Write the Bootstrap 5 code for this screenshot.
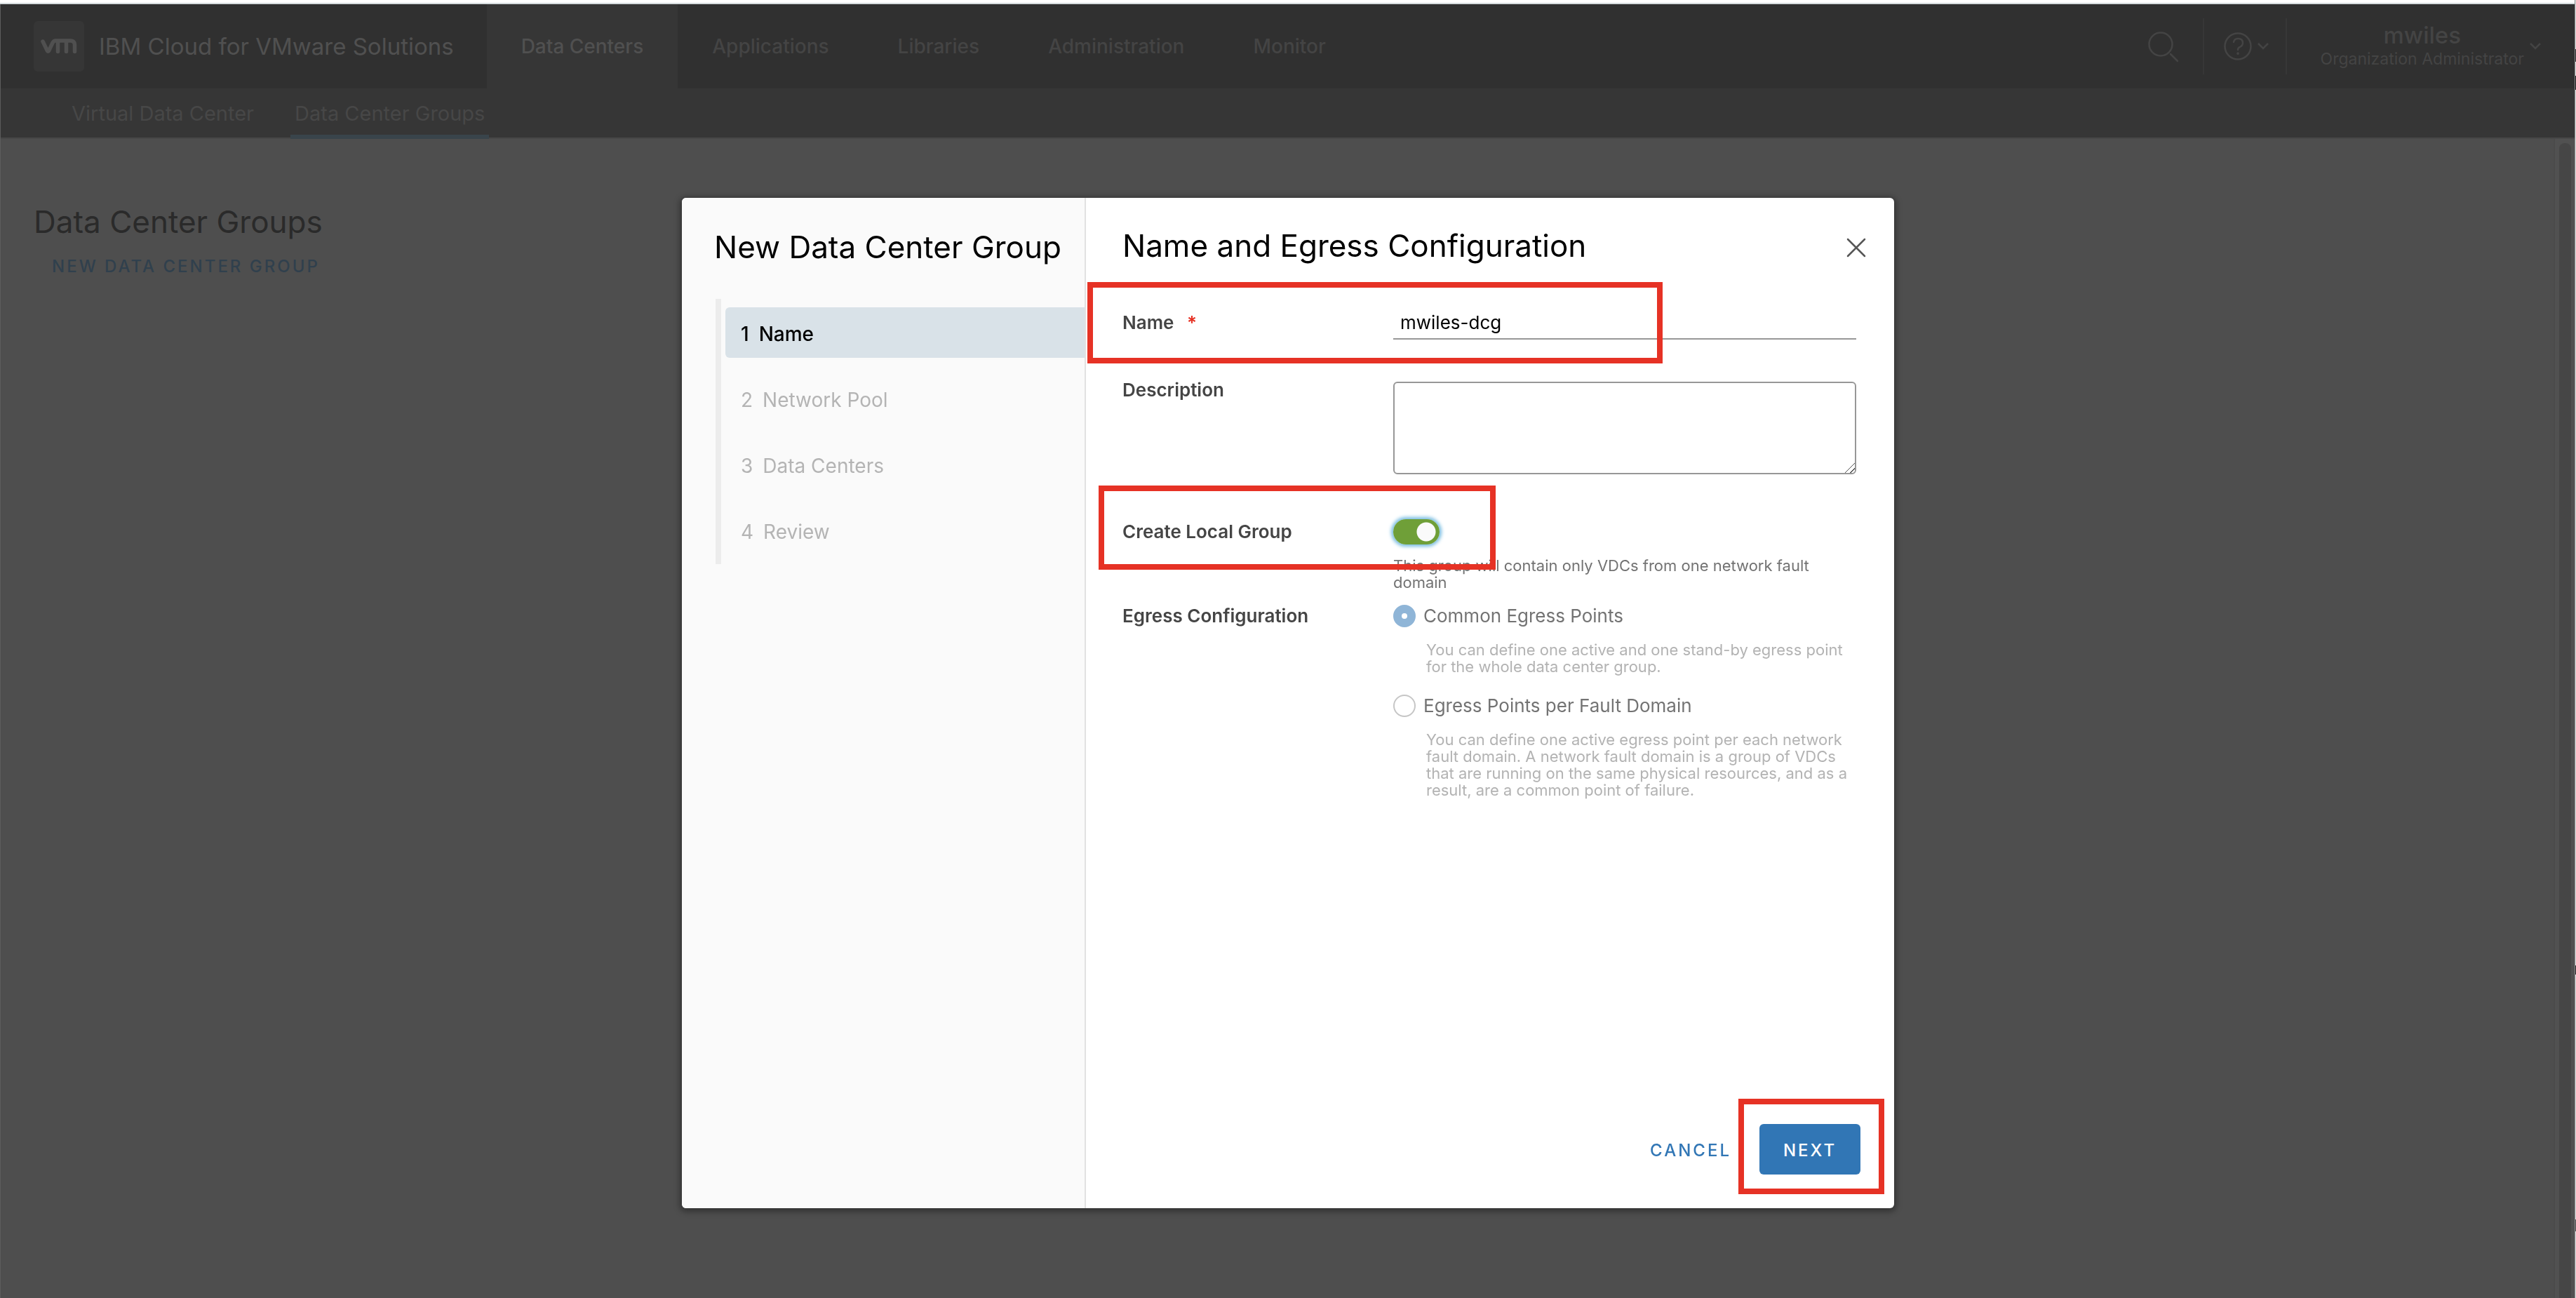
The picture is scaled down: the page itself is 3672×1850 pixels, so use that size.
<!DOCTYPE html>
<html lang="en">
<head>
<meta charset="utf-8">
<meta name="viewport" content="width=device-width, initial-scale=1">
<title>Data Center Groups</title>
<link href="https://cdn.jsdelivr.net/npm/bootstrap@5.3.0/dist/css/bootstrap.min.css" rel="stylesheet">
<style>
body{font-family:Inter,"Open Sans",sans-serif;background:#4e4e4e;color:#2a2a2a;font-size:26px;line-height:36px}
a{text-decoration:none;color:inherit}
.browser-line{height:6px;background:#fff;border-bottom:2px solid #d6dcde}
.app-shell{border-left:1px solid #5c5c5c}
.window-edge{width:2px;border-left:1px solid #8d8d8d;background:linear-gradient(#e4e4e4 70px,#222 70px 88px,#e4e4e4 88px 108px,#111 108px 128px,#e4e4e4 128px 1376px,#222 1376px 1389px,#e4e4e4 1389px 1738px,#4a4a4a 1738px 1755px,#e4e4e4 1755px)}
.topbar{height:120px;background:#303030;color:#444}
.brand{padding:0 47px;gap:21px;font-size:33px;color:#505050}
.brand-mark{width:72px;height:72px;border-radius:6px;background:#363636}
.main-tab{height:120px;padding:0 49px;font-size:28px;font-weight:500}
.main-tab.current{background:#363636;color:#505050}
.tool{height:80px;border-right:2px solid #373737}
.tool-btn{border:0;background:none;padding:0;color:inherit}
.user-name{font-size:33px;line-height:36px;font-weight:500}
.user-role{font-size:23px;line-height:32px}
.subbar{height:72px;background:#363636;border-bottom:2px solid #484848;padding-left:95px;gap:46px;color:#474747}
.sub-tab{height:72px;line-height:72px;padding:0 6px;font-size:29px}
.sub-tab.current{border-bottom:6px solid #39444b}
.page-body{padding:88px 47px}
.page-title{font-size:44px;line-height:60px;font-weight:400;margin:0}
.caps-btn{font-size:24px;line-height:36px;font-weight:500;letter-spacing:3px;border:0;background:none;padding:0;text-transform:uppercase}
.new-group{color:#30404d;margin:16px 0 0 26px}
.scroll-track{width:30px;background:#515151;border-left:2px solid #4b4b4b;padding:6px 5px 0 6px}
.scroll-thumb{border-radius:8px 8px 0 0;background:#464646}
.wizard-dialog{max-width:1728px;width:100%;margin:282px auto 0}
.wizard{min-height:1440px;border:0;border-radius:6px;box-shadow:0 2px 8px 3px rgba(0,0,0,.35);overflow:hidden;color:#000}
.wizard-side{width:576px;background:#fafafa;border-right:2px solid #e1e1e1;padding:40px 0 0 46px}
.wizard-title{font-size:44px;line-height:60px;font-weight:400;margin:0;color:#000;white-space:nowrap}
.steps{margin:44px 0 0 2px;border-left:8px solid #ececec;padding:12px 0 12px 6px;gap:22px}
.step{height:72px;padding:4px 0 0 22px;gap:14px;border-radius:6px 0 0 6px;color:#b4b4b4;font-size:28px}
.step.current{background:#d9e2e8;color:#000;font-weight:500}
.wizard-main{padding:38px 54px 48px 52px}
.close-btn{border:0;background:none;padding:6px 0 0;margin-right:-14px;color:#565656;line-height:0}
.field{display:grid;grid-template-columns:386px 1fr}
.field-name{margin-top:56px}
.field-desc{margin-top:60px}
.field-local{margin-top:64px}
.field-egress{margin-top:20px}
.field-label{font-weight:600;font-size:26px;line-height:24px;color:#454545}
.field-local .field-label,.field-egress .field-label{line-height:36px}
.field-egress .field-label{line-height:32px}
.required{color:#e63022;margin-left:12px}
.text-line{height:48px;width:100%;border:0;border-bottom:2px solid #979797;padding:0 10px;font-size:26px;color:#000;background:none}
.text-area{display:block;width:100%;height:132px;border:2px solid #979797;border-radius:6px}
.text-area::-webkit-resizer{background:linear-gradient(135deg,transparent 50%,#555 50% 55%,transparent 55% 76%,#555 76% 81%,transparent 81%)}
.switch{appearance:none;width:66px;height:36px;border-radius:18px;background:radial-gradient(circle at 47px 18px,#fafafa 13px,#6f9f38 14px);box-shadow:0 0 5px 3px #79bde0;margin:0;display:block}
.hint{font-size:22px;line-height:24px;color:#737373;margin:18px 0 0}
.hint.muted{color:#b3b3b3;margin:20px 0 28px 47px}
.pick{appearance:none;width:32px;height:32px;border:2px solid #c6c6c6;border-radius:50%;margin:0}
.pick:checked{border:12px solid #8fb5d7}
.pick-row{gap:11px;line-height:32px;color:#737373;font-size:26px}
.callout-frame{position:absolute;border:8px solid #e63225;pointer-events:none}
.frame-name{left:-50px;top:-34px;width:820px;height:116px}
.frame-local{left:-34px;top:-48px;width:566px;height:120px}
.frame-next{inset:-36px -34px -28px -30px}
.wizard-foot{margin-right:-6px}
.cancel-btn{color:#3176b5;margin-right:40px;padding-top:3px}
.next-btn{background:#3176b5;color:#fff;width:144px;height:72px;border-radius:6px;padding-top:3px}
</style>
<script src="https://cdn.jsdelivr.net/npm/bootstrap@5.3.0/dist/js/bootstrap.bundle.min.js"></script>
</head>
<body>
<div class="d-flex min-vh-100">
<div class="flex-grow-1 d-flex flex-column">
  <div class="browser-line"></div>
  <div class="app-shell flex-grow-1 d-flex flex-column">
    <header class="topbar d-flex align-items-center">
      <a href="#" class="brand d-flex align-items-center">
        <span class="brand-mark d-flex align-items-center justify-content-center">
          <svg width="52" height="22" viewBox="0 0 52 22" fill="none" stroke="currentColor" stroke-width="5.500" stroke-linecap="round" stroke-linejoin="round"><path d="M3 4l6.500 13.500q1 1.500 2 0L17 6q1.500-3 4-3h21q6.500 0 6.500 6v9.500M24.500 4v14.500M36.500 4v14.500"/></svg>
        </span>
        <span>IBM Cloud for VMware Solutions</span>
      </a>
      <nav class="d-flex">
        <a href="#" class="main-tab current d-flex align-items-center">Data Centers</a>
        <a href="#" class="main-tab d-flex align-items-center">Applications</a>
        <a href="#" class="main-tab d-flex align-items-center">Libraries</a>
        <a href="#" class="main-tab d-flex align-items-center">Administration</a>
        <a href="#" class="main-tab d-flex align-items-center">Monitor</a>
      </nav>
      <div class="ms-auto d-flex align-items-center">
        <div class="tool d-flex align-items-center pe-4"><button class="tool-btn me-2" aria-label="Search"><svg width="48" height="48" viewBox="0 0 48 48" fill="none" stroke="currentColor" stroke-width="2.500" stroke-linecap="round"><circle cx="20" cy="21" r="16.500"/><path d="M34 35l10 10"/></svg></button></div>
        <div class="tool d-flex align-items-center px-4"><button class="tool-btn d-flex align-items-center gap-2 ms-1" aria-label="Help"><svg width="40" height="40" viewBox="0 0 40 40" fill="none" stroke="currentColor" stroke-width="2.500" stroke-linecap="round"><circle cx="20" cy="20" r="18.500"/><path d="M14 14q1-5 6-5 7 0 7 6 0 4-4 6-3 1-3 4"/><path d="M20 30v.5" stroke-width="3.500"/></svg><svg width="16" height="10" viewBox="0 0 16 10" fill="none" stroke="currentColor" stroke-width="2.500"><path d="M1 1l7 7 7-7"/></svg></button></div>
        <button class="tool-btn d-flex align-items-center gap-2 ps-5 pe-5"><span class="text-center"><span class="d-block user-name">mwiles</span><span class="d-block user-role">Organization Administrator</span></span><svg width="16" height="10" viewBox="0 0 16 10" fill="none" stroke="currentColor" stroke-width="2.500"><path d="M1 1l7 7 7-7"/></svg></button>
      </div>
    </header>
    <nav class="subbar d-flex">
      <a href="#" class="sub-tab">Virtual Data Center</a>
      <a href="#" class="sub-tab current">Data Center Groups</a>
    </nav>
    <div class="flex-grow-1 d-flex">
      <main class="page-body flex-grow-1">
        <h1 class="page-title">Data Center Groups</h1>
        <button class="caps-btn new-group">New Data Center Group</button>
      </main>
      <div class="scroll-track d-flex"><div class="scroll-thumb flex-grow-1"></div></div>
    </div>
  </div>
</div>
<div class="window-edge"></div>
</div>

<div class="modal d-block overflow-hidden" role="dialog" aria-labelledby="wizard-title">
  <div class="modal-dialog wizard-dialog">
    <div class="modal-content wizard flex-row">
      <aside class="wizard-side flex-shrink-0">
        <h2 class="wizard-title" id="wizard-title">New Data Center Group</h2>
        <nav class="steps d-flex flex-column">
          <a href="#" class="step current d-flex align-items-center"><span>1</span><span>Name</span></a>
          <a href="#" class="step d-flex align-items-center"><span>2</span><span>Network Pool</span></a>
          <a href="#" class="step d-flex align-items-center"><span>3</span><span>Data Centers</span></a>
          <a href="#" class="step d-flex align-items-center"><span>4</span><span>Review</span></a>
        </nav>
      </aside>
      <form class="wizard-main flex-grow-1 d-flex flex-column">
        <div class="d-flex justify-content-between align-items-center">
          <h2 class="wizard-title">Name and Egress Configuration</h2>
          <button type="button" class="close-btn" aria-label="Close"><svg width="28" height="28" viewBox="0 0 28 28" stroke="currentColor" stroke-width="2.500" stroke-linecap="round"><path d="M2 2l24 24M26 2L2 26"/></svg></button>
        </div>
        <div class="field field-name position-relative align-items-center">
          <label class="field-label" for="group-name">Name <span class="required">*</span></label>
          <input class="text-line" id="group-name" type="text" value="mwiles-dcg">
          <div class="callout-frame frame-name"></div>
        </div>
        <div class="field field-desc">
          <label class="field-label" for="group-desc">Description</label>
          <textarea class="text-area" id="group-desc"></textarea>
        </div>
        <div class="field field-local position-relative">
          <label class="field-label" for="local-group">Create Local Group</label>
          <div>
            <input class="switch" id="local-group" type="checkbox" role="switch" checked>
            <p class="hint">This group will contain only VDCs from one network fault domain</p>
          </div>
          <div class="callout-frame frame-local"></div>
        </div>
        <div class="field field-egress" role="radiogroup" aria-labelledby="egress-label">
          <span class="field-label" id="egress-label">Egress Configuration</span>
          <div>
            <div class="pick-row d-flex"><input class="pick" type="radio" name="egress" id="egress-common" checked><label for="egress-common">Common Egress Points</label></div>
            <p class="hint muted">You can define one active and one stand-by egress point for the whole data center group.</p>
            <div class="pick-row d-flex"><input class="pick" type="radio" name="egress" id="egress-fault"><label for="egress-fault">Egress Points per Fault Domain</label></div>
            <p class="hint muted">You can define one active egress point per each network fault domain. A network fault domain is a group of VDCs that are running on the same physical resources, and as a result, are a common point of failure.</p>
          </div>
        </div>
        <div class="wizard-foot mt-auto d-flex justify-content-end align-items-center">
          <button type="button" class="caps-btn cancel-btn">Cancel</button>
          <div class="position-relative">
            <button type="submit" class="caps-btn next-btn">Next</button>
            <div class="callout-frame frame-next"></div>
          </div>
        </div>
      </form>
    </div>
  </div>
</div>
</body>
</html>
